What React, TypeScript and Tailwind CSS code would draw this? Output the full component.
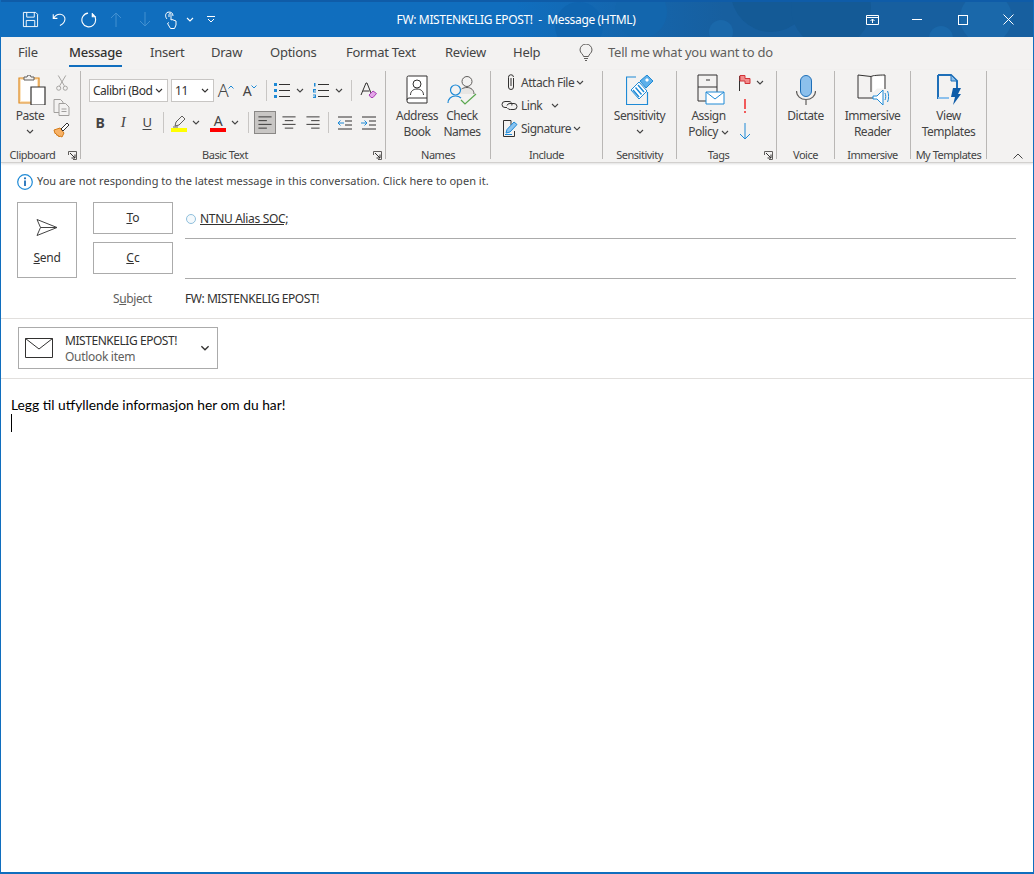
import type { ReactNode } from 'react'

function Chevron({ className = '' }: { className?: string }) {
  return (
    <svg width="8" height="5" viewBox="0 0 8 5" className={className} aria-hidden="true">
      <path d="M1 1l3 3 3-3" fill="none" stroke="currentColor" strokeWidth="1.1" />
    </svg>
  )
}

function Launcher() {
  return (
    <svg width="9" height="9" viewBox="0 0 9 9" className="absolute right-[3px] bottom-[2px] text-[#605e5c]" aria-hidden="true">
      <path d="M.5 4V.5h8v8H5" fill="none" stroke="currentColor" />
      <path d="M2 2l5 5M7 3.5V7H3.5" fill="none" stroke="#323130" />
    </svg>
  )
}

function Group({ width, label, launcher, children }: { width: string; label: string; launcher?: boolean; children: ReactNode }) {
  return (
    <div className={`relative flex h-[92px] flex-col ${width}`}>
      <div className="h-[78px]">{children}</div>
      <div className={`text-center text-[11px] leading-[14px] whitespace-nowrap text-[#444] ${launcher ? 'pr-[16px]' : ''}`}>{label}</div>
      {launcher && <Launcher />}
    </div>
  )
}

function Divider() {
  return <div className="mt-px h-[88px] w-px shrink-0 bg-[#b9b7b5]" />
}

function VSep({ ml }: { ml: string }) {
  return <div className={`h-[21px] w-px bg-[#c8c6c4] ${ml}`} />
}

function BigButton({ icon, lines, chevron, width }: { icon: ReactNode; lines: ReactNode[]; chevron?: boolean; width: string }) {
  return (
    <div className={`flex flex-col items-center pt-px text-[12px] leading-[16px] whitespace-nowrap text-[#444] ${width}`}>
      <div className="flex h-[37px] items-center justify-center">{icon}</div>
      {lines.map((l, i) => (
        <div key={i} className="flex items-center">{l}</div>
      ))}
      {chevron && <Chevron className="mt-[5px] text-[#444]" />}
    </div>
  )
}

function Box({ w, ml = '', children, active }: { w: string; ml?: string; children: ReactNode; active?: boolean }) {
  return (
    <div className={`flex h-[23px] items-center justify-center ${w} ${ml} ${active ? 'border border-[#8a8886] bg-[#c8c6c4]' : ''}`}>
      {children}
    </div>
  )
}

function AlignIcon({ kind }: { kind: 'left' | 'center' | 'right' }) {
  const rows = {
    left: ['M1 2h14', 'M1 6h9', 'M1 10h14', 'M1 14h9'],
    center: ['M1 2h14', 'M3.5 6h9', 'M1 10h14', 'M3.5 14h9'],
    right: ['M1 2h14', 'M6 6h9', 'M1 10h14', 'M6 14h9'],
  }[kind]
  return (
    <svg width="16" height="15" viewBox="0 0 16 16" aria-hidden="true">
      {rows.map((d) => (
        <path key={d} d={d} stroke="#323130" strokeWidth="1" />
      ))}
    </svg>
  )
}

function IndentIcon({ out }: { out?: boolean }) {
  return (
    <svg width="16" height="14" viewBox="0 0 16 14" aria-hidden="true">
      <path d="M1 1h14M8 5h7M8 9h7M1 13h14" stroke="#323130" />
      {out ? (
        <path d="M7 7H1M3.5 4.5L1 7l2.5 2.5" stroke="#1e8ad6" fill="none" />
      ) : (
        <path d="M0 7h6M3.5 4.5L6 7 3.5 9.5" stroke="#1e8ad6" fill="none" />
      )}
    </svg>
  )
}

const tabs = [
  { name: 'File', w: 'w-[51px]' },
  { name: 'Message', w: 'w-[81px]' },
  { name: 'Insert', w: 'w-[61px]' },
  { name: 'Draw', w: 'w-[59px]' },
  { name: 'Options', w: 'w-[76px]' },
  { name: 'Format Text', w: 'w-[99px]' },
  { name: 'Review', w: 'w-[68px]' },
  { name: 'Help', w: 'w-[46px]' },
]

function TitleBar() {
  return (
    <div className="relative flex h-[37px] shrink-0 items-center overflow-hidden border-t-2 border-[#0f5ca8] bg-gradient-to-r from-[#106ebe] from-50% to-[#175f9f] to-70% text-white">
      {/* background pattern of the title bar */}
      <svg width="1034" height="37" viewBox="0 0 1034 37" className="absolute top-0 left-0" aria-hidden="true">
        <circle cx="578" cy="24" r="24" fill="#0f65b0" />
        <circle cx="640" cy="10" r="26" fill="#1366ad" />
        <circle cx="770" cy="-10" r="40" fill="#145a96" />
        <circle cx="830" cy="6" r="40" fill="#145a96" />
        <circle cx="985" cy="16" r="26" fill="#1a68aa" />
        <circle cx="940" cy="36" r="12" fill="#1a68aa" />
        <circle cx="720" cy="30" r="12" fill="#1a68aa" />
      </svg>
      <div className="relative flex flex-1 items-center pl-[21px]">
        <svg width="17" height="17" viewBox="0 0 18 18" aria-hidden="true" fill="none" stroke="#fff">
          <path d="M1.5 1.5h13l2 2v13h-15zM5 1.5v5h8v-5M4.5 16.5V10h9v6.5" />
        </svg>
        <svg width="15" height="14" viewBox="0 0 18 16" className="ml-[13px]" aria-hidden="true" fill="none" stroke="#fff" strokeWidth="1.3">
          <path d="M1.5 1v5h5M1.5 6C4 2.5 7 .8 10 1.2c4 .5 6 3.5 5.5 6.500-.4 3-3 5.500-6 7" />
        </svg>
        <svg width="16" height="16" viewBox="0 0 17 17" className="ml-[14px]" aria-hidden="true" fill="none" stroke="#fff" strokeWidth="1.2">
          <path d="M5 2.2A7.3 7.3 0 1 0 9.5 1.2M5 1v4h-4" transform="matrix(-1 0 0 1 17 0)" />
        </svg>
        <svg width="12" height="15" viewBox="0 0 12 15" className="ml-[13px] opacity-35" aria-hidden="true" fill="none" stroke="#9fd0f5">
          <path d="M6 15V1M1 6l5-5 5 5" />
        </svg>
        <svg width="12" height="15" viewBox="0 0 12 15" className="ml-[17px] opacity-35" aria-hidden="true" fill="none" stroke="#9fd0f5">
          <path d="M6 0v14M1 9l5 5 5-5" />
        </svg>
        <svg width="15" height="18" viewBox="0 0 15 18" className="ml-[13px]" aria-hidden="true" fill="none" stroke="#fff">
          <path d="M3 8C1 6 1 2 4 1.200 7 .5 9 2 9 5M5 6V3.500a1 1 0 0 1 2 0V9l1-.5 4 1.500v4L10.500 17.500H6.500L3.500 12.500 5 11.500" />
        </svg>
        <Chevron className="ml-[7px]" />
        <svg width="8" height="7" viewBox="0 0 8 7" className="ml-[13px]" aria-hidden="true" fill="none" stroke="#fff">
          <path d="M0 .5h8M1 3l3 3 3-3" />
        </svg>
      </div>
      <div className="absolute left-[395px] w-[240px] text-center text-[12px] tracking-[-0.35px] whitespace-pre">FW: MISTENKELIG EPOST!  -  Message (HTML)</div>
      <div className="relative flex items-center pr-[19px]">
        <svg width="13" height="10" viewBox="0 0 13 10" aria-hidden="true" fill="none" stroke="#fff">
          <path d="M.5.500h12v9H.5zM.5 2.500h12M6.500 8V4M4.500 6l2-2 2 2" />
        </svg>
        <div className="ml-[33px] h-px w-[10px] bg-white" />
        <div className="ml-[36px] h-[10px] w-[10px] border border-white" />
        <svg width="11" height="11" viewBox="0 0 11 11" className="ml-[35px]" aria-hidden="true">
          <path d="M.5.500l10 10M10.500.500l-10 10" stroke="#fff" />
        </svg>
      </div>
    </div>
  )
}

function TabRow() {
  return (
    <div className="flex h-[33px] shrink-0 bg-[#f3f2f1] pl-[17px] text-[13px] tracking-[-0.25px] text-[#444]">
      {tabs.map((t) => (
        <div key={t.name} className={`flex h-[31px] items-center ${t.w}`}>
          <span className={t.name === 'Message' ? 'relative font-medium text-[#323130]' : ''}>
            {t.name}
            {t.name === 'Message' && <span className="absolute right-0 -bottom-[5px] left-0 h-[2px] bg-[#106ebe]" />}
          </span>
        </div>
      ))}
      <div className="flex h-[31px] items-center pl-[20px]">
        <svg width="14" height="17" viewBox="0 0 14 17" aria-hidden="true" fill="none" stroke="#605e5c">
          <path d="M4.500 12.500c0-2-3.500-3.500-3.500-6.500a6 6 0 0 1 12 0c0 3-3.500 4.500-3.500 6.500zM5 14.500h4M6 16.500h2" />
        </svg>
        <span className="ml-[15px] text-[#605e5c]">Tell me what you want to do</span>
      </div>
    </div>
  )
}

function Ribbon() {
  return (
    <div className="flex h-[93px] shrink-0 border-b border-[#d2d0ce] bg-[#f3f2f1] tracking-[-0.03em] shadow-[0_1px_2px_rgba(0,0,0,0.12)]">
      <Group width="w-[79px]" label="Clipboard" launcher>
        <div className="flex pl-[7px]">
          <BigButton
            width="w-[44px]"
            lines={['Paste']}
            chevron
            icon={
              <svg width="28" height="30" viewBox="0 0 28 30" className="ml-[4px]" aria-hidden="true">
                <path d="M1 3h20v25H1z" fill="#fbe3c0" stroke="#e08a1e" strokeWidth="1.200" />
                <path d="M3 5h16v21H3z" fill="#fff" />
                <path d="M6 5V2h3l1-2h2l1 2h3v3z" fill="#f3f2f1" stroke="#605e5c" />
                <path d="M13 12h14v18H13z" fill="#fff" stroke="#323130" strokeWidth="1.200" />
              </svg>
            }
          />
          <div className="ml-[1px] flex flex-col items-center pt-[3px]">
            <svg width="12" height="16" viewBox="0 0 12 17" className="mt-[2px]" aria-hidden="true" fill="none" stroke="#a19f9d">
              <path d="M2 .500l6.500 11M10 .500L3.500 11.500" />
              <circle cx="2.500" cy="14" r="2.200" />
              <circle cx="9.500" cy="14" r="2.200" />
            </svg>
            <svg width="17" height="17" viewBox="0 0 17 17" className="mt-[8px]" aria-hidden="true" fill="none" stroke="#a19f9d">
              <path d="M6 13.500H1V.500h6.500L10 3v2" />
              <path d="M6 4.500h6.500L16 8v8.500H6zM8.500 10h5M8.500 12.500h5" />
            </svg>
            <svg width="17" height="16" viewBox="0 0 17 16" className="mt-[6px]" aria-hidden="true">
              <path d="M1 8l6-2 4 5-2 4-2-1-1 1-1-2-1 .5-1-2-1 0z" fill="#f7b267" stroke="#d47a17" />
              <path d="M8 7l6-6 2 2-6 6z" fill="#fff" stroke="#323130" />
            </svg>
          </div>
        </div>
      </Group>
      <Divider />
      <Group width="w-[304px]" label="Basic Text" launcher>
        <div className="flex flex-col gap-[9px] pt-[9px] pl-[8px]">
          <div className="flex items-center">
            <div className="flex h-[23px] w-[79px] items-center justify-between border border-[#c8c6c4] bg-white pr-[4px] pl-[3px] text-[12px] whitespace-nowrap text-[#323130]">
              <span>Calibri (Bod</span>
              <Chevron />
            </div>
            <div className="ml-[3px] flex h-[23px] w-[43px] items-center justify-between border border-[#c8c6c4] bg-white pr-[4px] pl-[3px] text-[12px] text-[#323130]">
              <span>11</span>
              <Chevron />
            </div>
            <Box w="w-[24px]">
              <span className="text-[18px] font-light text-[#444]">A</span>
              <svg width="6" height="4" viewBox="0 0 6 4" className="mb-[8px]" aria-hidden="true"><path d="M.5 3.500L3 1l2.500 2.500" fill="none" stroke="#1e8ad6" /></svg>
            </Box>
            <Box w="w-[24px]">
              <span className="text-[14px] text-[#444]">A</span>
              <svg width="6" height="4" viewBox="0 0 6 4" className="mb-[8px]" aria-hidden="true"><path d="M.5.500L3 3 5.500.500" fill="none" stroke="#1e8ad6" /></svg>
            </Box>
            <VSep ml="ml-[4px]" />
            <Box w="w-[20px]" ml="ml-[5px]">
              <svg width="16" height="15" viewBox="0 0 16 15" aria-hidden="true">
                <path d="M0 0h3v3H0zM0 6h3v3H0zM0 12h3v3H0z" fill="#1e8ad6" />
                <path d="M5 1.500h11M5 7.500h11M5 13.500h11" stroke="#323130" />
              </svg>
            </Box>
            <Box w="w-[16px]"><Chevron className="text-[#444]" /></Box>
            <Box w="w-[20px]" ml="ml-[3px]">
              <svg width="16" height="15" viewBox="0 0 16 15" aria-hidden="true">
                <path d="M1 0h1.500v3.500H1zM0 6h3v1.500H1v1h2V9.500H0zM0 11.500h3V15H0v-1h2v-.500H.5v-.500H2V12.500H0z" fill="#1e8ad6" />
                <path d="M5 1.500h11M5 7.500h11M5 13.500h11" stroke="#323130" />
              </svg>
            </Box>
            <Box w="w-[16px]"><Chevron className="text-[#444]" /></Box>
            <VSep ml="ml-[4px]" />
            <Box w="w-[20px]" ml="ml-[6px]">
              <svg width="17" height="17" viewBox="0 0 17 17" aria-hidden="true">
                <path d="M1 13L6 1h1l4 10M2.800 9h6.700" fill="none" stroke="#323130" />
                <path d="M9 13l4-4 3.500 2.500-3.500 4H11z" fill="#e3a6e8" stroke="#a83db5" />
              </svg>
            </Box>
          </div>
          <div className="flex items-center">
            <Box w="w-[22px]"><span className="text-[14px] font-bold text-[#444]">B</span></Box>
            <Box w="w-[24px]"><span className="font-['Liberation_Serif',serif] text-[15px] italic text-[#444]">I</span></Box>
            <Box w="w-[24px]"><span className="text-[13px] text-[#444] underline underline-offset-2">U</span></Box>
            <VSep ml="ml-[4px]" />
            <div className="ml-[7px] flex h-[23px] w-[16px] flex-col items-center justify-end pb-[2px]">
              <svg width="15" height="13" viewBox="0 0 15 13" aria-hidden="true">
                <path d="M3 11l1-4 6-6 3 3-6 6zM1 12h5" fill="none" stroke="#605e5c" />
              </svg>
              <div className="h-[4px] w-[16px] bg-[#ffff00]" />
            </div>
            <Box w="w-[18px]"><Chevron className="text-[#444]" /></Box>
            <div className="ml-[5px] flex h-[23px] w-[16px] flex-col items-center justify-end pb-[2px]">
              <span className="text-[14px] leading-[14px] text-[#444]">A</span>
              <div className="h-[4px] w-[16px] bg-[#ff0000]" />
            </div>
            <Box w="w-[18px]"><Chevron className="text-[#444]" /></Box>
            <VSep ml="ml-[4px]" />
            <Box w="w-[22px]" ml="ml-[5px]" active><AlignIcon kind="left" /></Box>
            <Box w="w-[22px]" ml="ml-[2px]"><AlignIcon kind="center" /></Box>
            <Box w="w-[22px]" ml="ml-[2px]"><AlignIcon kind="right" /></Box>
            <VSep ml="ml-[4px]" />
            <Box w="w-[22px]" ml="ml-[5px]"><IndentIcon out /></Box>
            <Box w="w-[22px]" ml="ml-[2px]"><IndentIcon /></Box>
          </div>
        </div>
      </Group>
      <Divider />
      <Group width="w-[104px]" label="Names">
        <div className="flex pl-[9px]">
          <BigButton
            width="w-[44px]"
            lines={['Address', 'Book']}
            icon={
              <svg width="22" height="29" viewBox="0 0 22 29" aria-hidden="true" fill="none" stroke="#323130">
                <path d="M1 26V2.500A1.500 1.500 0 0 1 2.500 1H21v27H3a2 2 0 0 1-2-2zm0-1a2 2 0 0 1 2-2h18" fill="#fff" />
                <circle cx="11" cy="9" r="4" />
                <path d="M4.500 20c0-4 3-6 6.500-6s6.500 2 6.500 6" />
              </svg>
            }
          />
          <BigButton
            width="w-[46px]"
            lines={['Check', 'Names']}
            icon={
              <svg width="30" height="30" viewBox="0 0 30 30" aria-hidden="true" fill="none">
                <circle cx="20" cy="6.500" r="5" stroke="#605e5c" />
                <path d="M13 19c0-4 3-6.500 7-6.500s7 2.500 7 6.500z" fill="#e8e6e4" stroke="none" />
                <path d="M14.500 14c1.500-1 3.500-1.500 5.500-1.500 4 0 7 2.500 7 6.500" stroke="#605e5c" />
                <circle cx="8.500" cy="15" r="5" fill="#f3f2f1" stroke="#1e8ad6" strokeWidth="1.200" />
                <path d="M1 28c0-4 3-7 7.500-7 2 0 4 .600 5.500 2" stroke="#1e8ad6" strokeWidth="1.200" />
                <path d="M14 25l4 4 11-10" stroke="#5aa84e" strokeWidth="1.200" />
              </svg>
            }
          />
        </div>
      </Group>
      <Divider />
      <Group width="w-[111px]" label="Include">
        <div className="flex flex-col pt-px pl-[10px] text-[12px] whitespace-nowrap text-[#444]">
          <div className="flex h-[23px] items-center">
            <div className="flex w-[20px] justify-center">
              <svg width="10" height="17" viewBox="0 0 10 17" aria-hidden="true" fill="none" stroke="#323130">
                <path d="M7 4v9a2.500 2.500 0 0 1-5 0V3.500a2.500 2.500 0 0 1 5-.5" transform="translate(.5 0)" />
                <path d="M5 4v8" />
              </svg>
            </div>
            <span>Attach File</span>
            <Chevron className="ml-[2px]" />
          </div>
          <div className="flex h-[23px] items-center">
            <div className="flex w-[20px]">
              <svg width="17" height="11" viewBox="0 0 17 11" aria-hidden="true" fill="none" stroke="#323130">
                <path d="M6 7.500H4A3 3 0 0 1 4 1.500h4a3 3 0 0 1 2.800 4" />
                <path d="M6 5.500a3 3 0 0 1 3-2h4a3 3 0 0 1 0 6H9.500A3 3 0 0 1 6.500 8" />
              </svg>
            </div>
            <span>Link</span>
            <Chevron className="ml-[9px]" />
          </div>
          <div className="flex h-[23px] items-center">
            <div className="flex w-[20px] pl-[2px]">
              <svg width="15" height="17" viewBox="0 0 15 17" aria-hidden="true" fill="none">
                <path d="M8 .500H.500v16h11V11M8 .500V5" stroke="#323130" />
                <path d="M3 13l1-3.500L11 2l3 2.500L7 12z" fill="#8cc4f0" stroke="#1e8ad6" />
                <path d="M2 14.500h7" stroke="#1e8ad6" />
              </svg>
            </div>
            <span>Signature</span>
            <Chevron className="ml-[2px]" />
          </div>
        </div>
      </Group>
      <Divider />
      <Group width="w-[73px]" label="Sensitivity">
        <BigButton
          width="w-full"
          lines={['Sensitivity']}
          chevron
          icon={
            <svg width="28" height="30" viewBox="0 0 28 30" aria-hidden="true" fill="none">
              <path d="M10 2H.5v27.500h21V17" stroke="#1e8ad6" strokeWidth="1.200" />
              <path d="M5 15L13 7l8 9-8 8z" fill="#fff" stroke="#1e8ad6" />
              <path d="M7 15l6 7M9.500 12.500l6 7M12 10l6 7" stroke="#1e8ad6" strokeWidth="1.500" />
              <path d="M14 6l7-6 6 6-7 7z" fill="#5eb0ea" stroke="#1e8ad6" />
              <path d="M19 5l2-2 2 2-2 2z" fill="#fff" />
            </svg>
          }
        />
      </Group>
      <Divider />
      <Group width="w-[99px]" label="Tags" launcher>
        <div className="flex pl-[4px]">
          <BigButton
            width="w-[55px]"
            lines={[
              'Assign',
              <>
                Policy
                <Chevron className="ml-[3px]" />
              </>,
            ]}
            icon={
              <svg width="28" height="31" viewBox="0 0 28 31" className="ml-[5px]" aria-hidden="true" fill="none">
                <path d="M1 1h19v26H1zM1 13h19M9 6h4" stroke="#323130" />
                <path d="M9 18h18v12H9z" fill="#fff" stroke="#1e8ad6" />
                <path d="M9 18l9 7 9-7" stroke="#1e8ad6" />
              </svg>
            }
          />
          <div className="flex w-[17px] flex-col items-center pt-px">
            <div className="relative flex h-[23px] items-center">
              <svg width="12" height="16" viewBox="0 0 12 16" aria-hidden="true">
                <path d="M.5 1v15" stroke="#323130" />
                <path d="M1 .500h5v3h5v5H6V6H1z" fill="#f28b8b" stroke="#d13438" />
              </svg>
              <Chevron className="absolute left-[17px] text-[#444]" />
            </div>
            <div className="flex h-[23px] items-center">
              <div className="flex flex-col items-center gap-[2px]">
                <div className="h-[10px] w-[2px] bg-[#f15b5b]" />
                <div className="h-[2px] w-[2px] bg-[#f15b5b]" />
              </div>
            </div>
            <div className="flex h-[26px] items-center pt-[2px]">
              <svg width="12" height="17" viewBox="0 0 12 17" aria-hidden="true" fill="none" stroke="#1e8ad6">
                <path d="M6 0v16M1 11l5 5 5-5" />
              </svg>
            </div>
          </div>
        </div>
      </Group>
      <Divider />
      <Group width="w-[57px]" label="Voice">
        <BigButton
          width="w-full"
          lines={['Dictate']}
          icon={
            <svg width="20" height="30" viewBox="0 0 20 30" aria-hidden="true" fill="none">
              <rect x="4.500" y=".500" width="11" height="21" rx="5.500" fill="#8cc0ec" stroke="#1e6fb8" />
              <path d="M.500 16c0 5 4 8.500 9.500 8.500s9.500-3.500 9.500-8.500M10 24.500V30" stroke="#605e5c" strokeWidth="1.200" />
            </svg>
          }
        />
      </Group>
      <Divider />
      <Group width="w-[75px]" label="Immersive">
        <BigButton
          width="w-full"
          lines={['Immersive', 'Reader']}
          icon={
            <svg width="32" height="31" viewBox="0 0 32 31" aria-hidden="true" fill="none">
              <path d="M14 2.500L1 1v23h15" stroke="#323130" />
              <path d="M14 2.500c2-1 7-1.500 14-1.500v14M14 2.500V18" stroke="#323130" />
              <path d="M16 2.500h11v12H20l-4 4z" fill="#fff" />
              <path d="M16 22h4l6-6v15l-6-6h-4z" fill="#fff" stroke="#1e8ad6" />
              <path d="M28 19c1 2 1 5 0 7M30.500 17c1.500 3 1.500 8 0 11" stroke="#1e8ad6" />
            </svg>
          }
        />
      </Group>
      <Divider />
      <Group width="w-[75px]" label="My Templates">
        <BigButton
          width="w-full"
          lines={['View', 'Templates']}
          icon={
            <svg width="26" height="31" viewBox="0 0 26 31" aria-hidden="true">
              <path d="M2 1h13l6 6v7M2 1v23h10" fill="none" stroke="#1e6fb8" strokeWidth="2" />
              <path d="M15 1v6h6z" fill="#8cc0ec" stroke="#1e6fb8" />
              <path d="M2 24h11" stroke="#8cc0ec" strokeWidth="2" />
              <path d="M17 14h8l-3 6h3l-8 11 2-8h-4z" fill="#0f5ca8" />
            </svg>
          }
        />
      </Group>
      <Divider />
      <div className="flex flex-1 items-end justify-end pr-[10px] pb-[3px]">
        <svg width="10" height="6" viewBox="0 0 10 6" aria-hidden="true">
          <path d="M.5 5.500L5 1l4.500 4.500" fill="none" stroke="#444" />
        </svg>
      </div>
    </div>
  )
}

function ComposeHeader() {
  return (
    <div className="shrink-0 text-[#444]">
      <div className="flex h-[39px] items-center pb-[2px] pl-[16px] text-[11px] tracking-[0.02px]">
        <svg width="16" height="16" viewBox="0 0 16 16" aria-hidden="true">
          <circle cx="8" cy="8" r="7.300" fill="none" stroke="#1e8ad6" strokeWidth="1.200" />
          <path d="M8 6.500v5.500" stroke="#1e6fb8" strokeWidth="1.800" />
          <circle cx="8" cy="4.300" r="1.100" fill="#1e6fb8" />
        </svg>
        <span className="ml-[4px]">You are not responding to the latest message in this conversation. Click here to open it.</span>
      </div>
      <div className="flex pr-[17px] pl-[16px]">
        <div className="flex h-[76px] w-[60px] shrink-0 flex-col items-center border border-[#ababab] pt-[15px] text-[12px] tracking-[-0.3px] text-[#323130]">
          <svg width="22" height="19" viewBox="0 0 22 18" aria-hidden="true" fill="none" stroke="#444">
            <path d="M1 1l20 8-20 8 3.500-8zM4.500 9H21" />
          </svg>
          <span className="mt-[12px]"><u>S</u>end</span>
        </div>
        <div className="ml-[16px] flex w-[80px] shrink-0 flex-col gap-[8px] text-[12px] text-[#323130]">
          <div className="flex h-[32px] items-center justify-center border border-[#ababab]"><span><u>T</u>o</span></div>
          <div className="flex h-[32px] items-center justify-center border border-[#ababab]"><span><u>C</u>c</span></div>
        </div>
        <div className="ml-[12px] flex-1">
          <div className="flex h-[37px] items-center border-b border-[#ababab] pb-[3px] text-[12px] tracking-[-0.33px] text-[#323130]">
            <span className="ml-[1px] h-[10px] w-[10px] rounded-full border border-[#8fbfdc] bg-[#f4f9fc]" />
            <span className="ml-[4px]"><u>NTNU Alias SOC;</u></span>
          </div>
          <div className="h-[40px] border-b border-[#ababab]" />
        </div>
      </div>
      <div className="flex h-[40px] items-center border-b border-[#e1dfdd] text-[12px]">
        <span className="ml-[112px] w-[72px] tracking-[-0.4px] text-[#605e5c]">S<u>u</u>bject</span>
        <span className="tracking-[-0.45px] text-[#323130]">FW: MISTENKELIG EPOST!</span>
      </div>
      <div className="h-[60px] border-b border-[#e1dfdd] pt-[8px] pl-[17px]">
        <div className="flex h-[42px] w-[200px] items-center border border-[#ababab] pl-[6px] text-[12px] leading-[16px]">
          <svg width="28" height="20" viewBox="0 0 28 20" aria-hidden="true" fill="none" stroke="#323130">
            <path d="M.5.500h27v19H.5zM.5.500L14 11 27.500.500" />
          </svg>
          <div className="mt-[2px] ml-[12px] flex-1 whitespace-nowrap">
            <div className="tracking-[-0.45px] text-[#323130]">MISTENKELIG EPOST!</div>
            <div className="tracking-[-0.3px] text-[#605e5c]">Outlook item</div>
          </div>
          <Chevron className="mr-[7px] h-[6px] w-[10px] text-[#323130]" />
        </div>
      </div>
    </div>
  )
}

export default function App() {
  return (
    <div className="flex h-[874px] w-[1034px] flex-col overflow-hidden border-x border-b-2 border-[#106ebe] bg-white font-['Noto_Sans',sans-serif]">
      <TitleBar />
      <TabRow />
      <Ribbon />
      <ComposeHeader />
      <div className="pt-[17px] pl-[10px] font-['Lato',sans-serif] text-[13.8px] leading-[18px] text-black">
        <div>Legg til utfyllende informasjon her om du har!</div>
        <div className="h-[18px] w-px bg-black" />
      </div>
    </div>
  )
}
